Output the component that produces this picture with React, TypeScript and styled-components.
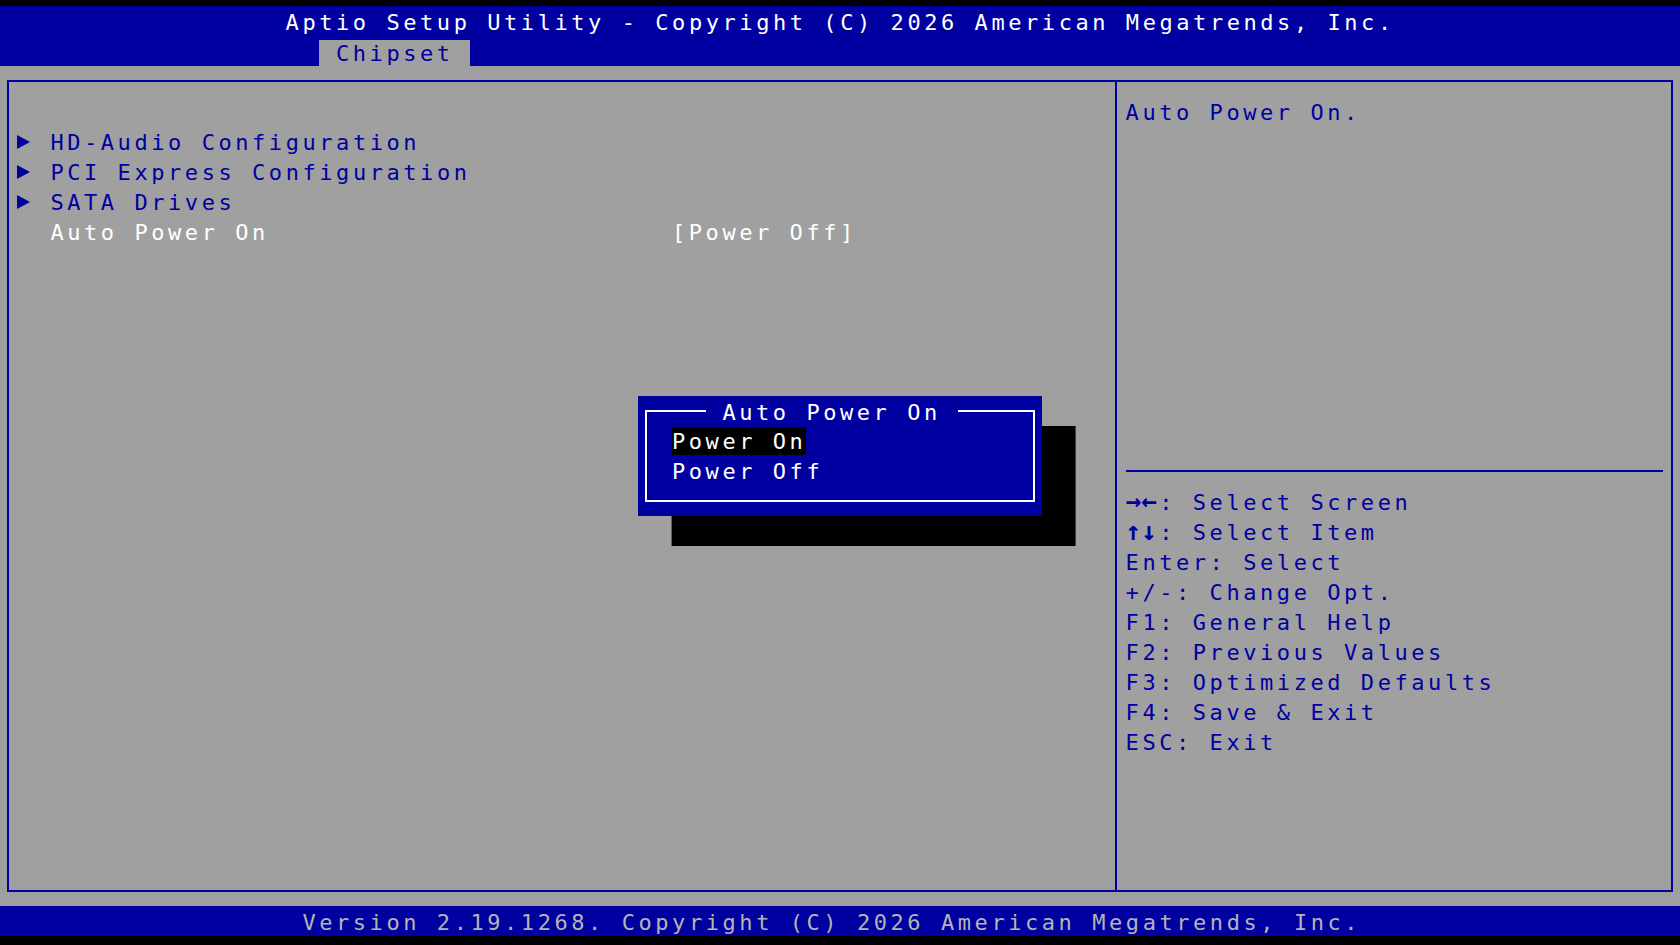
import styled, { createGlobalStyle, css } from "styled-components";

// text grid of the firmware screen: 100 columns x 31 rows
const CW = 16.8;
const RH = 30;
const LH = RH + 3; // glyphs sit a little low in their cell
const col = (n: number) => `${(n * CW).toFixed(1)}px`;

const BLUE = "#0000a0";
const GRAY = "#a0a0a0";
const WHITE = "#ffffff";

const GlobalStyle = createGlobalStyle`
    html, body {
        margin: 0;
        padding: 0;
        background: #000;
    }
    * {
        box-sizing: border-box;
    }
`;

const Screen = styled.div`
    position: relative;
    width: 1680px;
    height: 945px;
    background: #000;
    display: flex;
    flex-direction: column;
    font-family: "DejaVu Sans Mono", "Liberation Mono", monospace;
    font-size: 22px;
    letter-spacing: ${(CW - 0.602 * 22).toFixed(2)}px;
    white-space: pre;
    overflow: hidden;
`;

const TopGap = styled.div`
    height: 6px;
`;

const Header = styled.header`
    background: ${BLUE};
    height: ${RH * 2}px;
`;

const TitleLine = styled.div`
    height: ${RH}px;
    line-height: ${LH}px;
    padding-left: ${col(17)};
    color: ${WHITE};
`;

const TabRow = styled.div`
    height: ${RH}px;
    display: flex;
    padding-left: ${col(19)};
`;

const Tab = styled.div`
    margin-top: 4px;
    height: ${RH - 4}px;
    line-height: ${RH - 3}px;
    width: ${col(9)};
    padding-left: ${col(1)};
    background: ${GRAY};
    color: ${BLUE};
`;

const Body = styled.main`
    background: ${GRAY};
    height: ${RH * 28}px;
    padding: 14px 7px;
`;

const Frame = styled.div`
    height: 100%;
    border: 2px solid ${BLUE};
    display: grid;
    grid-template-columns: 1108px 1fr;
`;

const MenuPane = styled.section`
    border-right: 2px solid ${BLUE};
    padding-top: 44px;
    padding-left: 7.8px;
`;

const MenuRow = styled.div`
    display: flex;
    height: ${RH}px;
    line-height: ${LH}px;
`;

const Pointer = styled.span<{ $show: boolean }>`
    width: ${col(2)};
    display: flex;
    align-items: center;
    padding-top: 2px;
    ${(p) =>
        p.$show &&
        css`
            &::before {
                content: "";
                border-left: 13px solid ${BLUE};
                border-top: 7px solid transparent;
                border-bottom: 7px solid transparent;
            }
        `}
`;

const Label = styled.span<{ $active: boolean }>`
    width: ${col(37)};
    color: ${(p) => (p.$active ? WHITE : BLUE)};
`;

const Value = styled.span`
    color: ${WHITE};
`;

const HelpPane = styled.aside`
    padding: 14px 8.5px 0 8.6px;
    display: flex;
    flex-direction: column;
    color: ${BLUE};
`;

const HelpText = styled.div`
    height: ${RH * 12}px;
    line-height: ${LH}px;
`;

const Divider = styled.div`
    height: ${RH}px;
    display: flex;
    align-items: center;
    &::after {
        content: "";
        flex: 1;
        height: 2px;
        background: ${BLUE};
    }
`;

const KeyLine = styled.div`
    height: ${RH}px;
    line-height: ${LH}px;
`;

const Arrows = styled.b`
    display: inline-block;
    width: ${col(2)};
    font-size: 26px;
    letter-spacing: 0;
    font-weight: bold;
    vertical-align: top;
    line-height: ${LH - 2}px;
`;

const Footer = styled.footer`
    background: ${BLUE};
    height: ${RH}px;
    line-height: ${LH}px;
    padding-left: ${col(18)};
    color: #b4b4b4;
`;

const Popup = styled.div`
    position: absolute;
    left: ${col(38)};
    top: ${6 + RH * 13}px;
    width: ${col(24)};
    height: ${RH * 4}px;
    background: ${BLUE};
    padding: 14px 7px;
    box-shadow: ${col(2)} ${RH}px 0 #000;
`;

const PopupFrame = styled.div`
    height: 100%;
    border: 2px solid ${WHITE};
`;

const PopupTitle = styled.div`
    margin: -16px 0 0 58.2px;
    width: ${col(15)};
    padding-left: ${col(1)};
    height: ${RH}px;
    line-height: ${LH}px;
    background: ${BLUE};
    color: ${WHITE};
`;

const Option = styled.div`
    height: ${RH}px;
    display: flex;
    align-items: center;
    padding-left: 24.6px;
`;

const OptionText = styled.span<{ $selected: boolean }>`
    height: 28px;
    line-height: 30px;
    color: ${WHITE};
    background: ${(p) => (p.$selected ? "#000" : "transparent")};
`;

const BottomGap = styled.div`
    flex: 1;
`;

const menu = [
    { label: "HD-Audio Configuration", sub: true },
    { label: "PCI Express Configuration", sub: true },
    { label: "SATA Drives", sub: true },
    { label: "Auto Power On", sub: false, value: "[Power Off]" },
];

const keys: [string, string][] = [
    ["→←", ": Select Screen"],
    ["↑↓", ": Select Item"],
    ["", "Enter: Select"],
    ["", "+/-: Change Opt."],
    ["", "F1: General Help"],
    ["", "F2: Previous Values"],
    ["", "F3: Optimized Defaults"],
    ["", "F4: Save & Exit"],
    ["", "ESC: Exit"],
];

export default function App() {
    return (
        <>
            <GlobalStyle />
            <Screen>
                <TopGap />
                <Header>
                    <TitleLine>Aptio Setup Utility - Copyright (C) 2026 American Megatrends, Inc.</TitleLine>
                    <TabRow>
                        <Tab>Chipset</Tab>
                    </TabRow>
                </Header>
                <Body>
                    <Frame>
                        <MenuPane>
                            {menu.map((item) => (
                                <MenuRow key={item.label}>
                                    <Pointer $show={item.sub} />
                                    <Label $active={!item.sub}>{item.label}</Label>
                                    {item.value && <Value>{item.value}</Value>}
                                </MenuRow>
                            ))}
                        </MenuPane>
                        <HelpPane>
                            <HelpText>Auto Power On.</HelpText>
                            <Divider />
                            {keys.map(([arrows, text]) => (
                                <KeyLine key={text}>
                                    {arrows && <Arrows>{arrows}</Arrows>}
                                    {text}
                                </KeyLine>
                            ))}
                        </HelpPane>
                    </Frame>
                </Body>
                <Footer>Version 2.19.1268. Copyright (C) 2026 American Megatrends, Inc.</Footer>
                <BottomGap />
                <Popup>
                    <PopupFrame>
                        <PopupTitle>Auto Power On </PopupTitle>
                        <Option>
                            <OptionText $selected>Power On</OptionText>
                        </Option>
                        <Option>
                            <OptionText $selected={false}>Power Off</OptionText>
                        </Option>
                    </PopupFrame>
                </Popup>
            </Screen>
        </>
    );
}
